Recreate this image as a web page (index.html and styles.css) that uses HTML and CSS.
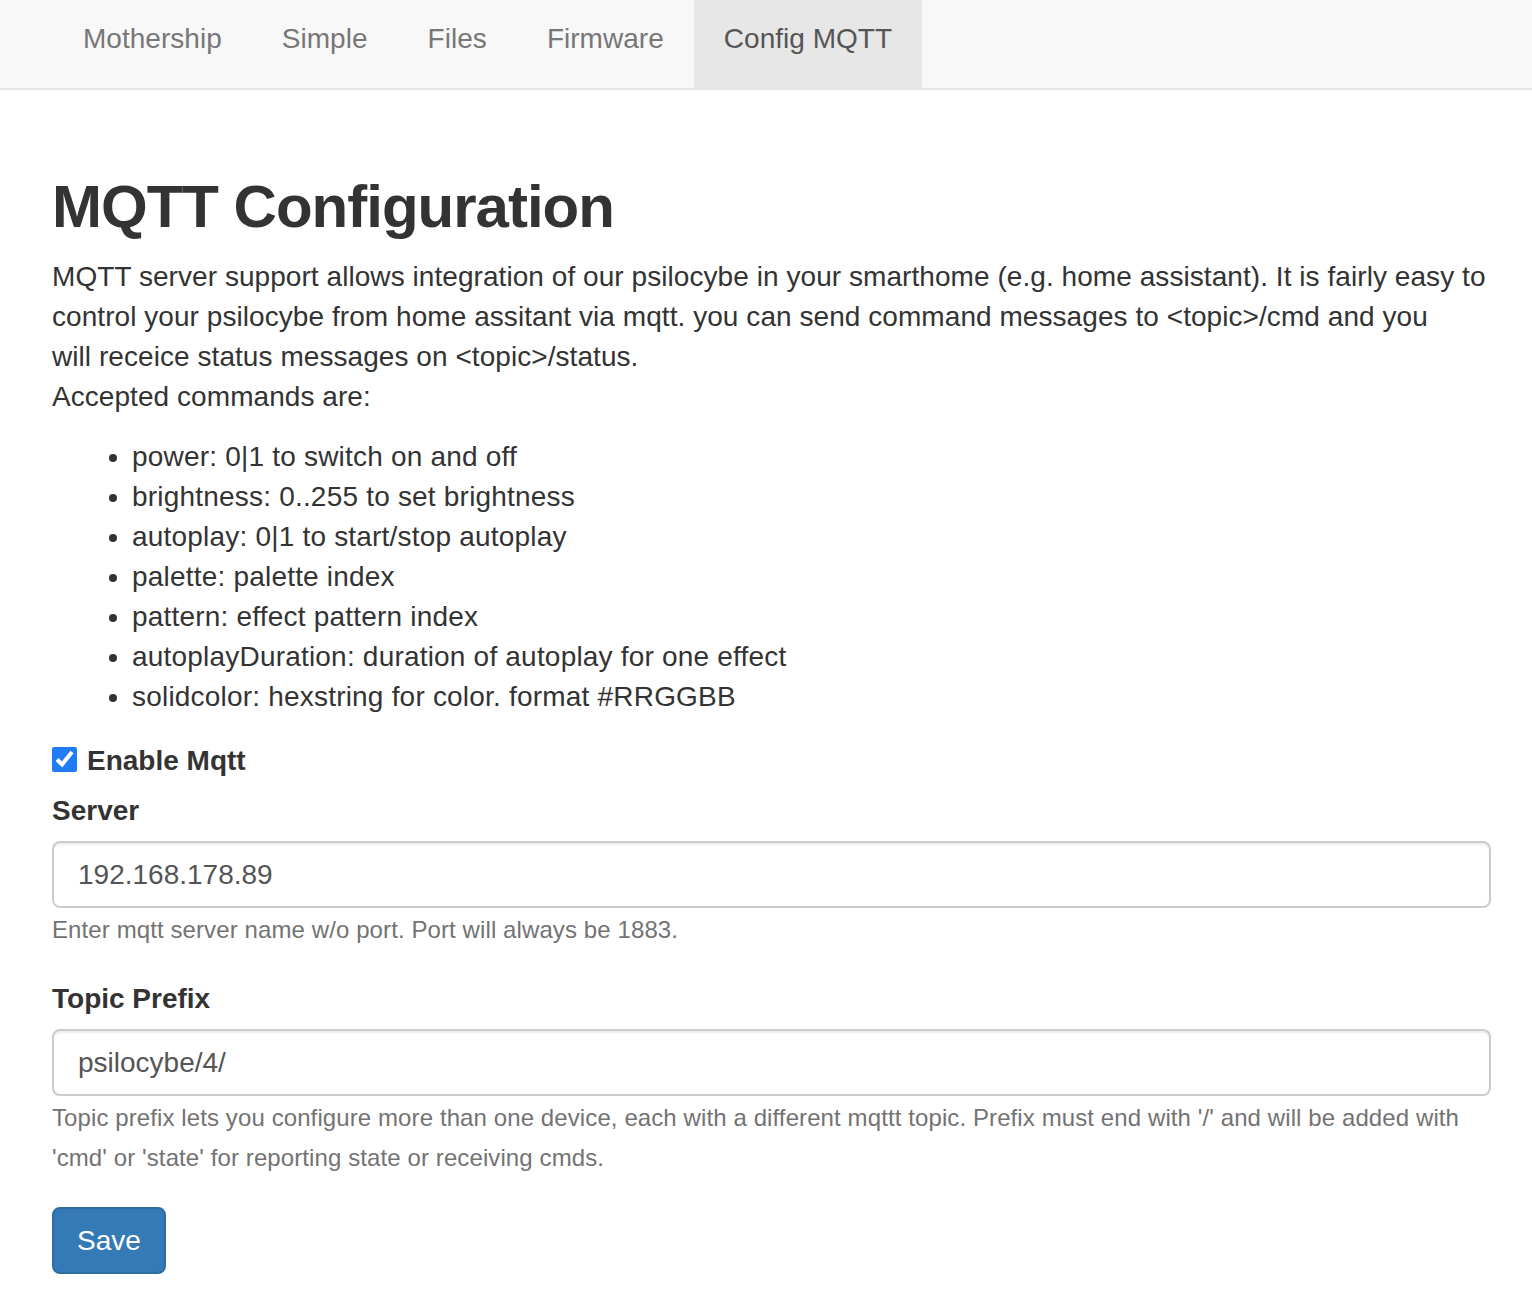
FILE: index.html
```html
<!DOCTYPE html>
<html lang="en">
<head>
<meta charset="utf-8">
<title>Config MQTT</title>
<link rel="stylesheet" href="styles.css">
</head>
<body>
<nav class="navbar">
  <ul class="nav">
    <li><a href="#">Mothership</a></li>
    <li><a href="#">Simple</a></li>
    <li><a href="#">Files</a></li>
    <li><a href="#">Firmware</a></li>
    <li class="active"><a href="#">Config MQTT</a></li>
  </ul>
</nav>
<main class="container">
  <h1 class="title">MQTT Configuration</h1>
  <p class="intro">MQTT server support allows integration of our psilocybe in your smarthome (e.g. home assistant). It is fairly easy to control your psilocybe from home assitant via mqtt. you can send command messages to &lt;topic&gt;/cmd and you will&nbsp;receice status messages on &lt;topic&gt;/status.<br>Accepted commands are:</p>
  <ul class="commands">
    <li>power: 0|1 to switch on and off</li>
    <li>brightness: 0..255 to set brightness</li>
    <li>autoplay: 0|1 to start/stop autoplay</li>
    <li>palette: palette index</li>
    <li>pattern: effect pattern index</li>
    <li>autoplayDuration: duration of autoplay for one effect</li>
    <li>solidcolor: hexstring for color. format #RRGGBB</li>
  </ul>
  <form class="form" onsubmit="return false">
    <div class="checkbox">
      <label><input type="checkbox" checked><span>Enable Mqtt</span></label>
    </div>
    <div class="form-group">
      <label class="control-label" for="server">Server</label>
      <input class="form-control" id="server" type="text" value="192.168.178.89">
      <p class="help-block">Enter mqtt server name w/o port. Port will always be 1883.</p>
    </div>
    <div class="form-group">
      <label class="control-label" for="topic">Topic Prefix</label>
      <input class="form-control" id="topic" type="text" value="psilocybe/4/">
      <p class="help-block">Topic prefix lets you configure more than one device, each with a different mqttt topic. Prefix must end with '/' and will be added with 'cmd' or 'state' for reporting state or receiving cmds.</p>
    </div>
    <button class="btn" type="submit">Save</button>
  </form>
</main>
</body>
</html>
```

FILE: styles.css
```css
html, body {
  margin: 0;
  padding: 0;
  background: #ffffff;
}
body {
  font-family: "Liberation Sans", Arial, Helvetica, sans-serif;
  font-size: 28px;
  line-height: 40px;
  color: #333333;
}
.navbar {
  background: #f8f8f8;
  border-bottom: 2px solid #e7e7e7;
  height: 88px;
  padding: 0 53px;
}
.nav {
  display: flex;
  list-style: none;
  margin: 0;
  padding: 0;
}
.nav a {
  display: block;
  padding: 19px 30px 29px;
  line-height: 40px;
  color: #777777;
  text-decoration: none;
  letter-spacing: 0.03px;
}
.nav .active a {
  background: #e7e7e7;
  color: #555555;
}
.container {
  padding: 0 41px 40px 52px;
}
.title {
  font-size: 60px;
  font-weight: 700;
  line-height: 66px;
  margin: 84px 0 17px;
  color: #333333;
  letter-spacing: -1px;
}
.intro {
  margin: 0 0 20px;
  letter-spacing: 0.06px;
}
.commands {
  margin: 0 0 24px;
  padding-left: 80px;
  letter-spacing: 0.2px;
}
.form {
  margin: 0;
}
.checkbox {
  margin: 0 0 10px;
}
.checkbox label {
  display: flex;
  align-items: center;
  gap: 10px;
  font-weight: 700;
}
.checkbox input {
  width: 25px;
  height: 25px;
  margin: 0;
  accent-color: #1f7cf4;
  position: relative;
  top: -2px;
}
.form-group {
  display: flex;
  flex-direction: column;
  margin-bottom: 29px;
}
.control-label {
  font-weight: 700;
  margin-bottom: 10px;
}
.form-control {
  box-sizing: border-box;
  height: 67px;
  margin: 0;
  padding: 0 24px;
  font-family: inherit;
  font-size: 28px;
  color: #555555;
  background: #ffffff;
  border: 2px solid #cccccc;
  border-radius: 8px;
  box-shadow: inset 0 2px 2px rgba(0, 0, 0, 0.075);
  outline: none;
}
.help-block {
  margin: 2px 0 0;
  font-size: 24px;
  line-height: 40px;
  color: #737373;
  letter-spacing: 0.1px;
}
.btn {
  box-sizing: border-box;
  height: 67px;
  padding: 0 23px;
  font-family: inherit;
  font-size: 28px;
  color: #ffffff;
  background: #337ab7;
  border: 2px solid #2e6da4;
  border-radius: 8px;
  cursor: pointer;
}
```
